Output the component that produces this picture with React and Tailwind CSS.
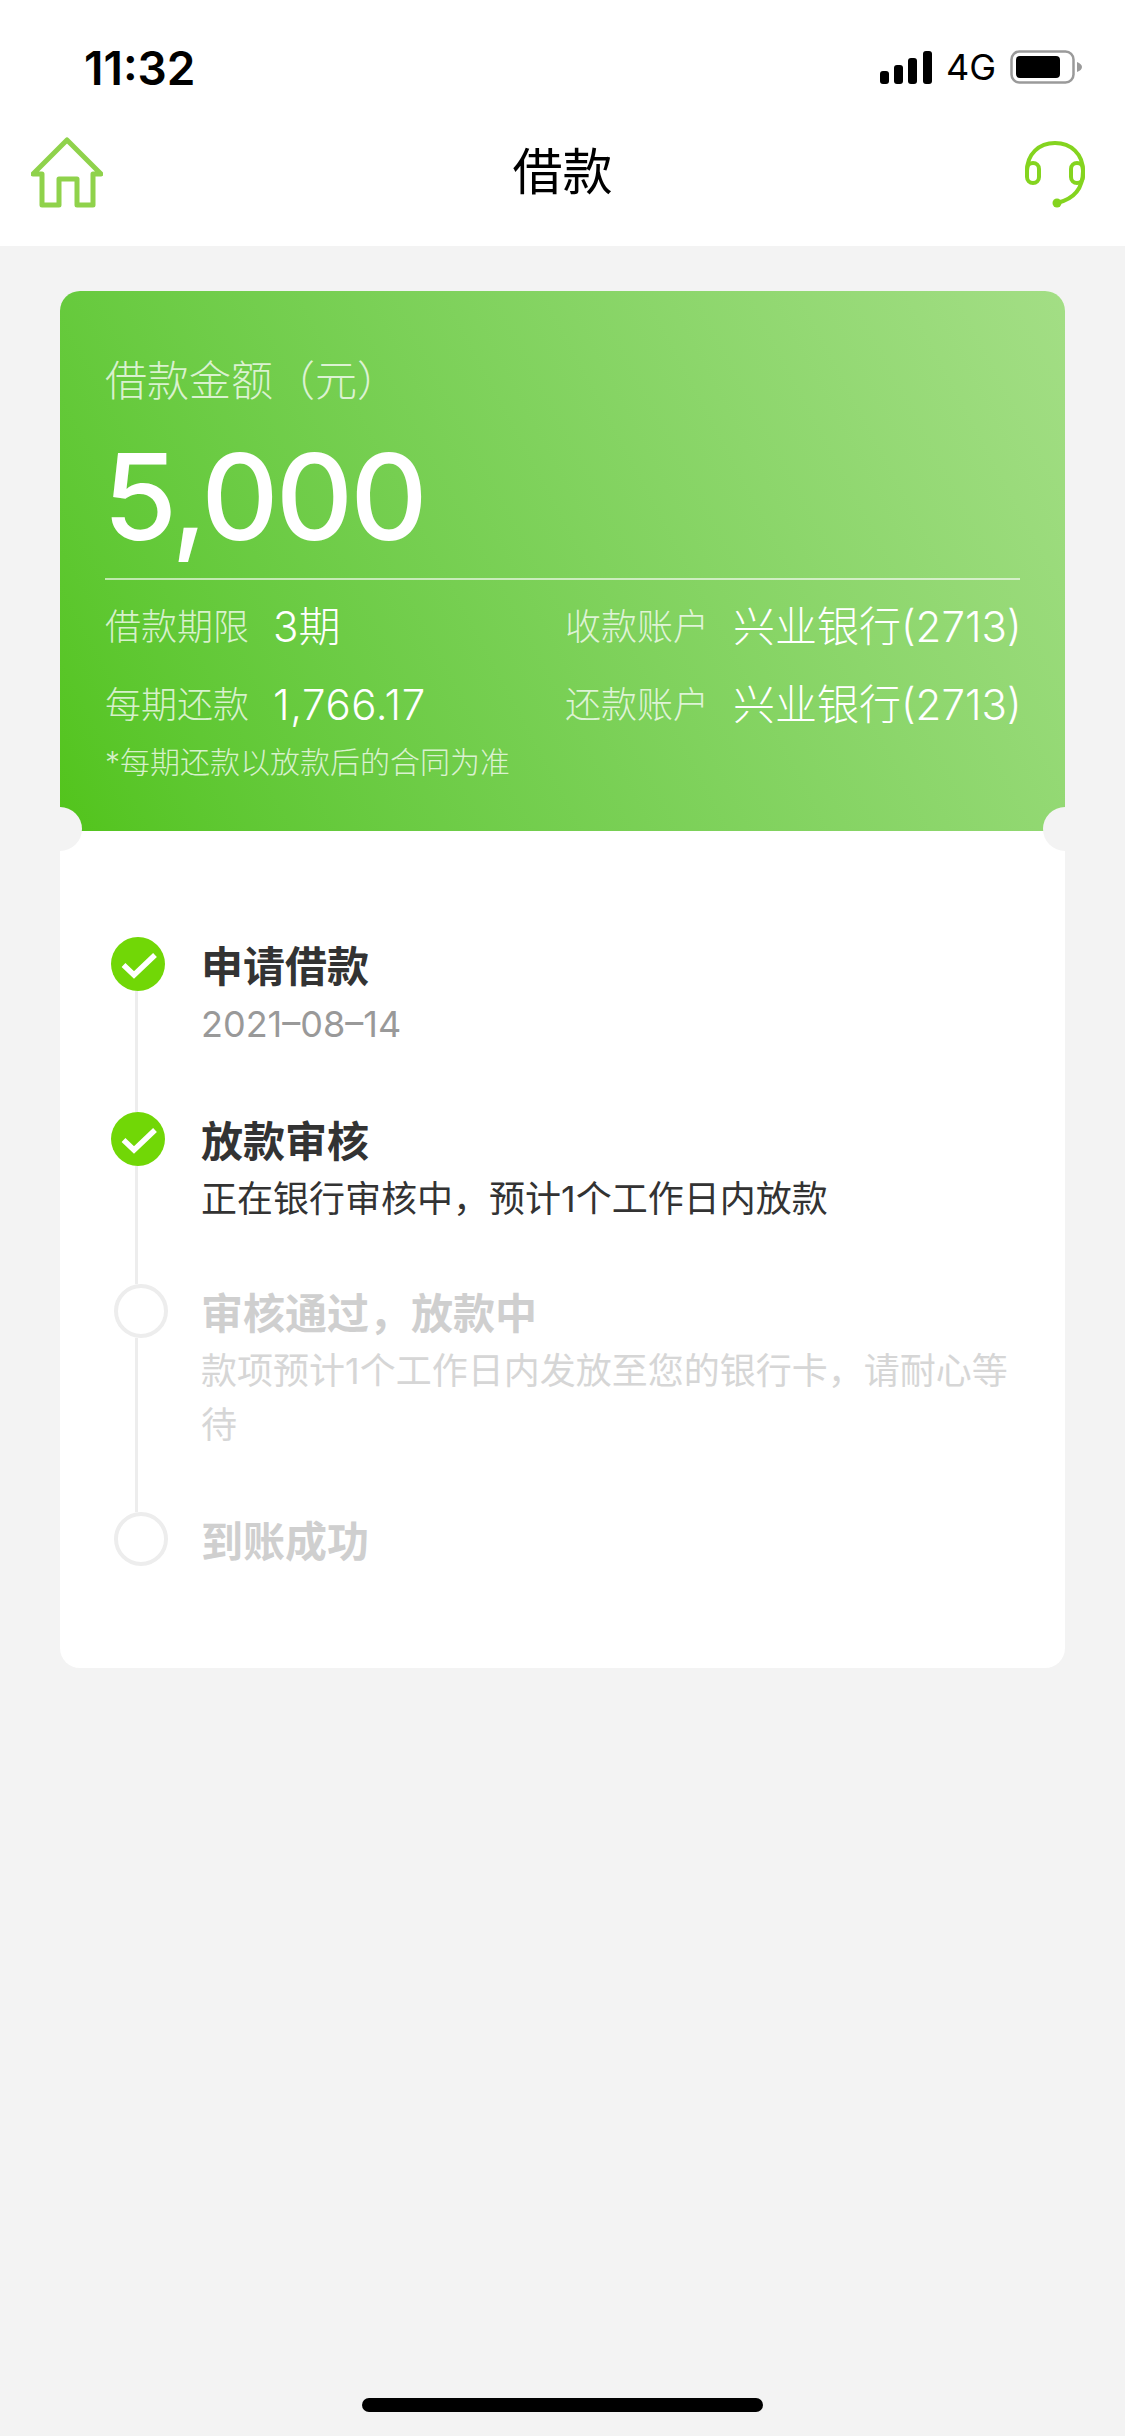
import React from 'react';

const font = "font-['Inter','Noto_Sans_CJK_SC',sans-serif]";

function HomeIcon() {
  return (
    <svg width="72" height="72" viewBox="0 0 72 72" fill="none" stroke="#8fd24b" strokeWidth="5" strokeLinejoin="round">
      <path d="M36 3 L70 37 H62 V68 H46 V42 H28 V68 H11 V37 H2 Z" />
    </svg>
  );
}

function HeadsetIcon() {
  return (
    <svg width="62" height="68" viewBox="0 0 62 68" fill="none" stroke="#84d41f" strokeWidth="4">
      <path d="M3 30 C3 13 15 2 31 2 C47 2 59 13 59 30 C59 47 50 58 33 62" />
      <rect x="3" y="22" width="12" height="20" rx="6" />
      <rect x="47" y="22" width="12" height="20" rx="6" />
      <circle cx="33" cy="62" r="4.5" fill="#84d41f" stroke="none" />
    </svg>
  );
}

function SignalIcon() {
  return (
    <svg width="52" height="33" viewBox="0 0 52 33" fill="#000">
      <rect x="0" y="20" width="9" height="13" rx="3" />
      <rect x="14" y="14" width="9" height="19" rx="3" />
      <rect x="28" y="7" width="9" height="26" rx="3" />
      <rect x="43" y="0" width="9" height="33" rx="3" />
    </svg>
  );
}

function BatteryIcon() {
  return (
    <svg width="72" height="34" viewBox="0 0 72 34">
      <rect x="1.5" y="1.5" width="62" height="31" rx="8" fill="none" stroke="#9a9a9a" strokeWidth="2.5" />
      <rect x="6" y="6" width="44" height="22" rx="4" fill="#000" />
      <path d="M67 12 C70 13 72 15 72 17 C72 19 70 21 67 22 Z" fill="#9a9a9a" />
    </svg>
  );
}

function CheckDot() {
  return (
    <svg width="54" height="54" viewBox="0 0 54 54" className="shrink-0">
      <circle cx="27" cy="27" r="27" fill="#71d706" />
      <path d="M12.5 28 L23 38 L44 18" fill="none" stroke="#fff" strokeWidth="5.5" />
    </svg>
  );
}

function EmptyDot() {
  return <div className="w-[54px] h-[54px] shrink-0 rounded-full border-[4px] border-[#ededed] ml-[3px]" />;
}

function InfoRow({ label, value, className }) {
  return (
    <div className={`flex items-center ${className}`}>
      <span className="w-[168px] text-[36px] leading-[46px] font-light text-white/75">{label}</span>
      <span className="text-[42px] leading-[46px] font-light text-white whitespace-nowrap">{value}</span>
    </div>
  );
}

function Step({ done, title, sub, subColor, height, last }) {
  return (
    <div className="flex" style={{ height }}>
      <div className="w-[91px] shrink-0 flex flex-col">
        {done ? <CheckDot /> : <EmptyDot />}
        {!last && <div className="flex-1 w-[3px] bg-[#ededed] ml-[24px]" />}
      </div>
      <div className="flex-1 min-w-0 pt-[3px] -ml-[1px]">
        <div className={`text-[42px] leading-[54px] font-bold whitespace-nowrap ${done ? 'text-[#333333]' : 'text-[#cfcfcf]'}`}>{title}</div>
        {sub && <div className={`mt-[3px] w-[810px] text-[36px] leading-[54px] ${subColor}`}>{sub}</div>}
      </div>
    </div>
  );
}

export default function App() {
  return (
    <div className={`w-[1125px] h-[2436px] bg-[#f3f3f3] flex flex-col ${font}`}>
      {/* header */}
      <div className="bg-white h-[246px] shrink-0 flex flex-col">
        <div className="flex items-center justify-between h-[137px] pl-[84px] pr-[43px]">
          <span className="text-[46px] font-semibold text-black">11:32</span>
          <div className="flex items-center pb-[3px]">
            <SignalIcon />
            <span className="ml-[14px] mr-[14px] text-[36px] font-normal text-black">4G</span>
            <BatteryIcon />
          </div>
        </div>
        <div className="flex items-start justify-between pl-[31px] pr-[39px]">
          <HomeIcon />
          <span className="text-[50px] leading-[70px] text-black font-normal -ml-[2px]">借款</span>
          <div className="pt-[4px]"><HeadsetIcon /></div>
        </div>
      </div>

      {/* card */}
      <div className="mx-[60px] mt-[45px] w-[1005px] rounded-[20px] overflow-hidden bg-white relative">
        <div className="h-[540px] bg-linear-62 from-[#52c41a] to-[#a3de85] pl-[45px] pt-[63px]">
          <div className="text-[42px] leading-[54px] font-light text-white/75">借款金额（元）</div>
          <div className="mt-[24px] -ml-[2px] text-[120px] leading-[130px] font-medium text-white tracking-[-3px]">5,000</div>
          <div className="mt-[16px] h-[2px] bg-white/60 w-[915px]" />
          <div className="mt-[24px] flex">
            <InfoRow label="借款期限" value="3期" className="w-[460px]" />
            <InfoRow label="收款账户" value="兴业银行(2713)" />
          </div>
          <div className="mt-[32px] flex">
            <InfoRow label="每期还款" value={<span className="tracking-[0.6px]">1,766.17</span>} className="w-[460px]" />
            <InfoRow label="还款账户" value="兴业银行(2713)" />
          </div>
          <div className="mt-[14px] text-[30px] leading-[40px] font-light text-white/75">*每期还款以放款后的合同为准</div>
        </div>
        <div className="pt-[106px] pb-[102px] pl-[51px]">
          <Step done title="申请借款" sub="2021–08–14" subColor="text-[#999999]" height={175} />
          <Step done title="放款审核" sub="正在银行审核中，预计1个工作日内放款" subColor="text-[#333333]" height={172} />
          <Step title="审核通过，放款中" sub="款项预计1个工作日内发放至您的银行卡，请耐心等待" subColor="text-[#d6d6d6]" height={228} />
          <Step title="到账成功" height={54} last />
        </div>
        {/* ticket notches */}
        <div className="absolute left-[-22px] top-[516px] w-[44px] h-[44px] rounded-full bg-[#f3f3f3]" />
        <div className="absolute right-[-22px] top-[516px] w-[44px] h-[44px] rounded-full bg-[#f3f3f3]" />
      </div>

      {/* home indicator */}
      <div className="mt-auto mb-[24px] mx-auto w-[401px] h-[14px] rounded-full bg-black" />
    </div>
  );
}
